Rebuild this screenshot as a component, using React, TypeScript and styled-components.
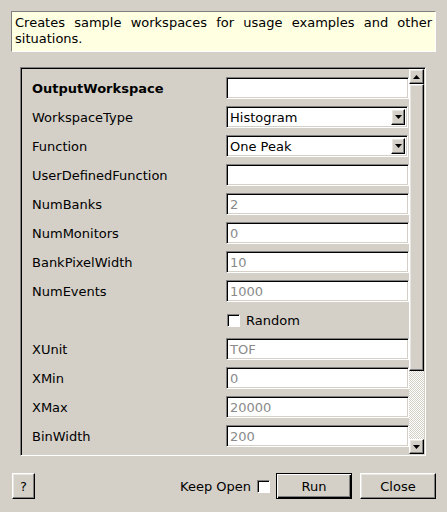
import React from "react";
import styled, { createGlobalStyle } from "styled-components";

const GlobalStyle = createGlobalStyle`
  html, body {
    margin: 0;
    padding: 0;
    background: #d4d0c8;
  }
  body {
    font-family: "DejaVu Sans", "Liberation Sans", sans-serif;
    font-size: 13px;
    color: #000;
  }
`;

const Dialog = styled.div`
  width: 447px;
  height: 512px;
  box-sizing: border-box;
  padding: 11px 11px 0 11px;
  display: flex;
  flex-direction: column;
  background: #d4d0c8;
`;

const Description = styled.div`
  height: 41px;
  box-sizing: border-box;
  padding: 3px 3px 0 3px;
  background: #ffffe1;
  border-top: 1px solid #808080;
  border-left: 1px solid #808080;
  border-right: 1px solid #ffffff;
  border-bottom: 1px solid #ffffff;
  line-height: 16px;
  text-align: justify;
`;

const Frame = styled.div`
  margin: 15px 10px 0 9px;
  height: 389px;
  box-sizing: border-box;
  display: flex;
  border-top: 1px solid #808080;
  border-left: 1px solid #808080;
  border-right: 1px solid #ffffff;
  border-bottom: 1px solid #ffffff;
  box-shadow: inset 1px 1px 0 #000000, inset -1px -1px 0 #d4d0c8;
  padding: 1px;
`;

const Content = styled.div`
  flex: 1;
  overflow: hidden;
  padding: 8px 0 0 10px;
  display: grid;
  grid-template-columns: 194px 1fr;
  grid-auto-rows: 22px;
  row-gap: 7px;
  align-content: start;
`;

const Label = styled.div<{ $bold?: boolean }>`
  display: flex;
  align-items: center;
  font-weight: ${(p) => (p.$bold ? "bold" : "normal")};
  white-space: nowrap;
`;

const sunken = `
  border-top: 1px solid #808080;
  border-left: 1px solid #808080;
  border-right: 1px solid #ffffff;
  border-bottom: 1px solid #ffffff;
  box-shadow: inset 1px 1px 0 #000000, inset -1px -1px 0 #d4d0c8;
`;

const raised = `
  border-top: 1px solid #ffffff;
  border-left: 1px solid #ffffff;
  border-right: 1px solid #000000;
  border-bottom: 1px solid #000000;
  box-shadow: inset -1px -1px 0 #808080, inset 1px 1px 0 #e8e6e1;
`;

const Field = styled.div<{ $disabled?: boolean }>`
  ${sunken}
  background: #ffffff;
  box-sizing: border-box;
  height: 22px;
  padding: 0 3px;
  display: flex;
  align-items: center;
  color: ${(p) => (p.$disabled ? "#8a8a8a" : "#000")};
  white-space: nowrap;
`;

const Combo = styled.div`
  ${sunken}
  background: #ffffff;
  box-sizing: border-box;
  height: 22px;
  margin-right: 1px;
  padding: 0 2px 0 3px;
  display: flex;
  align-items: center;
  justify-content: space-between;
`;

const ArrowButton = styled.div<{ $w?: number; $h?: number }>`
  ${raised}
  background: #d4d0c8;
  box-sizing: border-box;
  width: ${(p) => p.$w ?? 14}px;
  height: ${(p) => p.$h ?? 16}px;
  display: flex;
  align-items: center;
  justify-content: center;
  flex-shrink: 0;
`;

const CheckRow = styled.div`
  display: flex;
  align-items: center;
  gap: 6px;
  padding-left: 1px;
`;

const CheckBox = styled.div`
  width: 13px;
  height: 13px;
  box-sizing: border-box;
  background: #ffffff;
  border-top: 1px solid #808080;
  border-left: 1px solid #808080;
  border-right: 1px solid #ffffff;
  border-bottom: 1px solid #ffffff;
  box-shadow: inset 1px 1px 0 #000000;
`;

const ScrollBar = styled.div`
  width: 15px;
  display: flex;
  flex-direction: column;
  flex-shrink: 0;
`;

const Thumb = styled.div`
  ${raised}
  background: #d4d0c8;
  box-sizing: border-box;
  height: 287px;
`;

const Trough = styled.div`
  flex: 1;
  background-color: #d4d0c8;
  background-image: repeating-conic-gradient(#ffffff 0 25%, #d4d0c8 0 50%);
  background-size: 2px 2px;
`;

const Footer = styled.div`
  margin-top: 17px;
  display: flex;
  align-items: center;
  height: 26px;
`;

const Button = styled.div<{ $w: number; $default?: boolean }>`
  width: ${(p) => p.$w}px;
  height: 26px;
  box-sizing: border-box;
  display: flex;
  align-items: center;
  justify-content: center;
  background: #d4d0c8;
  ${(p) =>
    p.$default
      ? `border: 1px solid #000; box-shadow: inset 1px 1px 0 #ffffff, inset -1px -1px 0 #000000, inset -2px -2px 0 #808080;`
      : raised}
`;

const Spacer = styled.div`
  flex: 1;
`;

const KeepOpen = styled.div`
  display: flex;
  align-items: center;
  gap: 6px;
  margin-right: 6px;
`;

const Triangle = ({ up }: { up?: boolean }) => (
  <svg width="7" height="4" viewBox="0 0 7 4">
    <polygon points={up ? "3.5,0 7,4 0,4" : "0,0 7,0 3.5,4"} fill="#000" />
  </svg>
);

type Row =
  | { kind: "input"; label: string; value: string; bold?: boolean; disabled?: boolean }
  | { kind: "combo"; label: string; value: string }
  | { kind: "check"; label: string; value: string };

// the last row only shows its top edge above the frame's bottom, so it carries no text
const rows: Row[] = [
  { kind: "input", label: "OutputWorkspace", value: "", bold: true },
  { kind: "combo", label: "WorkspaceType", value: "Histogram" },
  { kind: "combo", label: "Function", value: "One Peak" },
  { kind: "input", label: "UserDefinedFunction", value: "" },
  { kind: "input", label: "NumBanks", value: "2", disabled: true },
  { kind: "input", label: "NumMonitors", value: "0", disabled: true },
  { kind: "input", label: "BankPixelWidth", value: "10", disabled: true },
  { kind: "input", label: "NumEvents", value: "1000", disabled: true },
  { kind: "check", label: "", value: "Random" },
  { kind: "input", label: "XUnit", value: "TOF", disabled: true },
  { kind: "input", label: "XMin", value: "0", disabled: true },
  { kind: "input", label: "XMax", value: "20000", disabled: true },
  { kind: "input", label: "BinWidth", value: "200", disabled: true },
  { kind: "input", label: "", value: "", disabled: true },
];

const App = () => {
  return (
    <>
      <GlobalStyle />
      <Dialog>
        <Description>
          Creates sample workspaces for usage examples and other situations.
        </Description>
        <Frame>
          <Content>
            {rows.map((r, i) => (
              <React.Fragment key={i}>
                <Label $bold={r.kind === "input" && r.bold}>{r.label}</Label>
                {r.kind === "input" && <Field $disabled={r.disabled}>{r.value}</Field>}
                {r.kind === "combo" && (
                  <Combo>
                    <span>{r.value}</span>
                    <ArrowButton>
                      <Triangle />
                    </ArrowButton>
                  </Combo>
                )}
                {r.kind === "check" && (
                  <CheckRow>
                    <CheckBox />
                    <span>{r.value}</span>
                  </CheckRow>
                )}
              </React.Fragment>
            ))}
          </Content>
          <ScrollBar>
            <ArrowButton $w={15} $h={15}>
              <Triangle up />
            </ArrowButton>
            <Thumb />
            <Trough />
            <ArrowButton $w={15} $h={15}>
              <Triangle />
            </ArrowButton>
          </ScrollBar>
        </Frame>
        <Footer>
          <Button $w={23} style={{ marginLeft: 1 }}>?</Button>
          <Spacer />
          <KeepOpen>
            <span>Keep Open</span>
            <CheckBox />
          </KeepOpen>
          <Button $w={76} $default>Run</Button>
          <Button $w={76} style={{ marginLeft: 8 }}>Close</Button>
        </Footer>
      </Dialog>
    </>
  );
};

export default App;
